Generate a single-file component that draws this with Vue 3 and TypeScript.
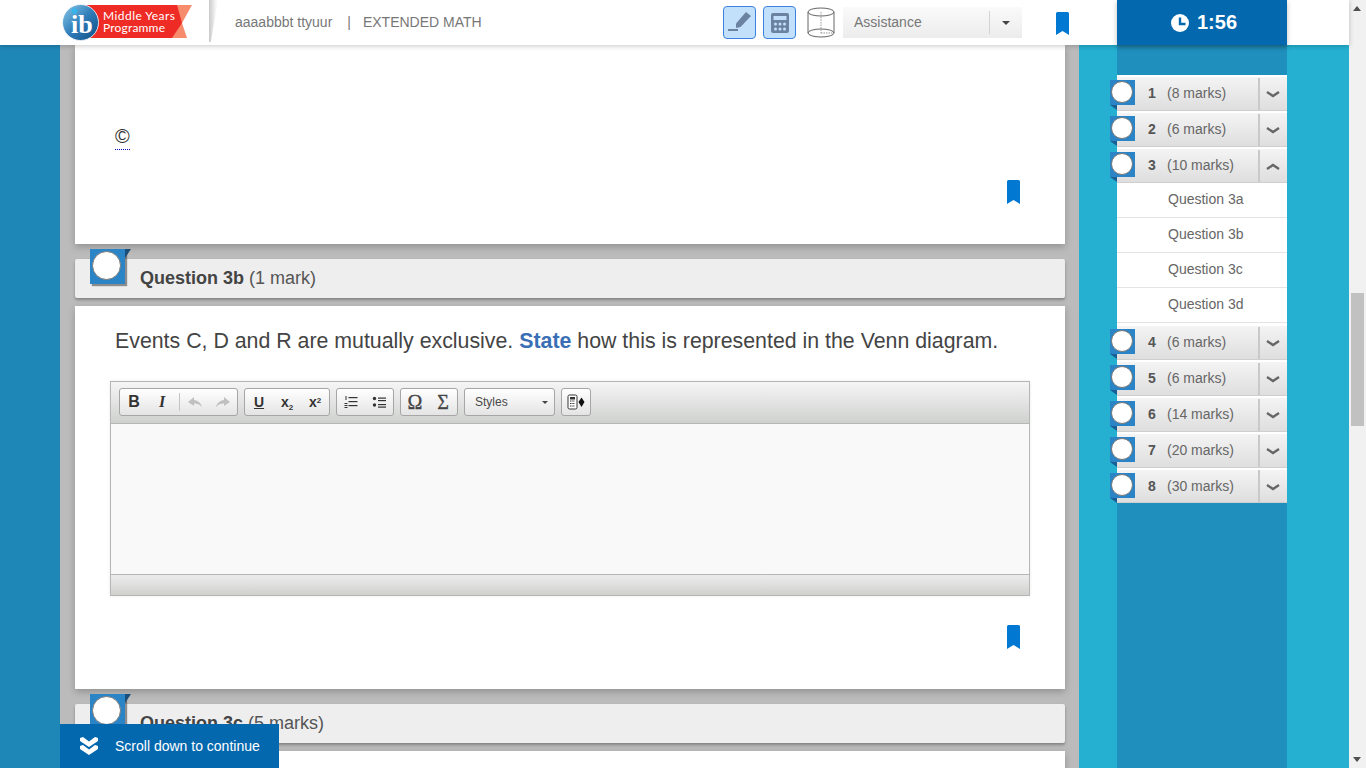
<script setup lang="ts">
interface Row { n: number; marks: number; open?: boolean; subs?: string[] }
const rows: Row[] = [
  { n: 1, marks: 8 },
  { n: 2, marks: 6 },
  { n: 3, marks: 10, open: true, subs: ['Question 3a', 'Question 3b', 'Question 3c', 'Question 3d'] },
  { n: 4, marks: 6 },
  { n: 5, marks: 6 },
  { n: 6, marks: 14 },
  { n: 7, marks: 20 },
  { n: 8, marks: 30 },
]
</script>

<template>
  <div class="root">
    <div class="page">
      <header class="top">
        <div class="logo">
          <svg class="logo-art" width="130" height="37" viewBox="0 0 130 37">
            <defs>
              <linearGradient id="lgBall" x1="0" y1="0" x2="1" y2="1">
                <stop offset="0" stop-color="#8ccbea" />
                <stop offset="0.5" stop-color="#2f7db9" />
                <stop offset="1" stop-color="#0d4c86" />
              </linearGradient>
            </defs>
            <path d="M110 1 H130 L120 19 L125 34 H108 Z" fill="#f78c6c" />
            <path d="M20 1 H115 L120 19 L110 34 H20 Z" fill="#ee2b24" />
            <circle cx="18.500" cy="18.500" r="18" fill="url(#lgBall)" stroke="#fff" stroke-width="0.800" />
            <circle cx="12.500" cy="7" r="2.800" fill="#35b5ea" />
            <text x="41" y="15.500" class="logo-t" textLength="72" lengthAdjust="spacing">Middle Years</text>
            <text x="41" y="28" class="logo-t" textLength="62" lengthAdjust="spacing">Programme</text>
            <text x="9" y="29" class="logo-ib">ib</text>
          </svg>
        </div>
        <div class="wedge"></div>
        <div class="crumb"><span>aaaabbbt ttyuur</span><span class="pipe">|</span><span>EXTENDED MATH</span></div>
        <div class="tools">
          <button class="tool">
            <svg width="25" height="25" viewBox="0 0 25 25">
              <path d="M9 13.500 L19 2 L24 6 L13.500 17 L9 18 Z" fill="#6b82a0" />
              <rect x="1" y="19" width="10" height="2" fill="#6b82a0" />
            </svg>
          </button>
          <button class="tool">
            <svg width="18" height="20" viewBox="0 0 18 20">
              <rect width="18" height="20" rx="2" fill="#6b82a0" />
              <rect x="2.500" y="3" width="13" height="4" fill="#c3e0fb" />
              <g fill="#c3e0fb">
                <circle cx="4.500" cy="11" r="1.500" /><circle cx="9" cy="11" r="1.500" /><circle cx="13.500" cy="11" r="1.500" />
                <circle cx="4.500" cy="16" r="1.500" /><circle cx="9" cy="16" r="1.500" /><circle cx="13.500" cy="16" r="1.500" />
              </g>
            </svg>
          </button>
          <svg class="cyl" width="28" height="31" viewBox="0 0 28 31" fill="none" stroke="#666">
            <ellipse cx="14" cy="5" rx="13" ry="4" fill="#fff" />
            <path d="M1 5 V26 M27 5 V26" />
            <ellipse cx="14" cy="26" rx="13" ry="4" />
            <path d="M14 5 V26 M14 26 H27" stroke-dasharray="1.500 1" stroke="#999" />
          </svg>
          <div class="assist">
            <span class="assist-l">Assistance</span>
            <span class="assist-c"><i class="caret"></i></span>
          </div>
          <svg class="mark-top" width="13" height="23" viewBox="0 0 13 23"><path d="M1.500 0 H11.500 Q13 0 13 1.500 V23 L6.500 19 L0 23 V1.500 Q0 0 1.500 0 Z" fill="#0179d3" /></svg>
        </div>
        <div class="timer">
          <svg width="18" height="18" viewBox="0 0 18 18"><circle cx="9" cy="9" r="9" fill="#fff" /><path d="M9 3.500 V10 H14.500" fill="none" stroke="#0468ae" stroke-width="2.400" /></svg>
          <span>1:56</span>
        </div>
      </header>

      <div class="body">
        <div class="gutter"></div>
        <main class="main">
          <section class="card c1">
            <div class="copy"><span>©</span></div>
            <div class="mark-row">
              <svg width="13" height="24" viewBox="0 0 13 24"><path d="M1.500 0 H11.500 Q13 0 13 1.500 V24 L6.500 20 L0 24 V1.500 Q0 0 1.500 0 Z" fill="#0179d3" /></svg>
            </div>
          </section>

          <div class="qbar">
            <span class="qbadge"><i></i></span>
            <span class="qtitle"><b>Question 3b</b> (1 mark)</span>
          </div>

          <section class="card c2">
            <p class="qtext">Events C, D and R are mutually exclusive. <b>State</b> how this is represented in the Venn diagram.</p>
            <div class="editor">
              <div class="ed-tb">
                <div class="grp g1">
                  <span class="bt tb">B</span><span class="bt ti">I</span><span class="sep"></span>
                  <span class="bt">
                    <svg width="16" height="12" viewBox="0 0 16 12"><path d="M7 1 L1 6 L7 10 V7.500 C10 7.500 13 8.500 15 11 C14 7 11 4.500 7 4 Z" fill="#c0c0c0" /></svg>
                  </span>
                  <span class="bt">
                    <svg width="16" height="12" viewBox="0 0 16 12"><path d="M9 1 L15 6 L9 10 V7.500 C6 7.500 3 8.500 1 11 C2 7 5 4.500 9 4 Z" fill="#c0c0c0" /></svg>
                  </span>
                </div>
                <div class="grp g2">
                  <span class="bt tu">U</span>
                  <span class="bt tx">x<sub>2</sub></span>
                  <span class="bt tx">x<sup>2</sup></span>
                </div>
                <div class="grp g3">
                  <span class="bt">
                    <svg width="14" height="14" viewBox="0 0 14 14" fill="#333"><rect x="1.500" y="1" width="1" height="4" /><rect x="4.500" y="2" width="9" height="1.200" /><rect x="4.500" y="6" width="9" height="1.200" /><rect x="4.500" y="10" width="9" height="1.200" /><rect x="0.500" y="8" width="3" height="1" /><rect x="0.500" y="10" width="3" height="1" /><rect x="0.500" y="12" width="3" height="1" /></svg>
                  </span>
                  <span class="bt">
                    <svg width="14" height="14" viewBox="0 0 14 14" fill="#333"><circle cx="2.500" cy="3.500" r="1.700" /><circle cx="2.500" cy="10" r="1.700" /><rect x="6" y="2.500" width="8" height="1.200" /><rect x="6" y="5" width="8" height="1.200" /><rect x="6" y="9" width="8" height="1.200" /><rect x="6" y="11.500" width="8" height="1.200" /></svg>
                  </span>
                </div>
                <div class="grp g4">
                  <span class="bt tsym">Ω</span>
                  <span class="bt tsym">Σ</span>
                </div>
                <div class="grp combo"><span>Styles</span><i class="caret sm"></i></div>
                <div class="grp g6">
                  <svg width="18" height="16" viewBox="0 0 18 16">
                    <rect x="1" y="1" width="9" height="14" rx="1.500" fill="#fff" stroke="#333" />
                    <rect x="3" y="3" width="5" height="2.500" fill="#333" />
                    <path d="M3 7 H8 M3 9.500 H8 M3 12 H8" stroke="#333" stroke-dasharray="1.500 0.800" />
                    <path d="M11.500 8 L14.500 3.500 L17.500 8 L14.500 13 Z" fill="#111" />
                  </svg>
                </div>
              </div>
              <div class="ed-area"></div>
              <div class="ed-foot"></div>
            </div>
            <div class="mark-row m2">
              <svg width="13" height="24" viewBox="0 0 13 24"><path d="M1.500 0 H11.500 Q13 0 13 1.500 V24 L6.500 20 L0 24 V1.500 Q0 0 1.500 0 Z" fill="#0179d3" /></svg>
            </div>
          </section>

          <div class="qbar">
            <span class="qbadge"><i></i></span>
            <span class="qtitle"><b>Question 3c</b> (5 marks)</span>
          </div>

          <section class="card c3"></section>

          <div class="scrolldown">
            <svg width="18" height="18" viewBox="0 0 18 18" fill="#fff"><path d="M0 1 L3 0 L9 4.500 L15 0 L18 1 V4 L9 10 L0 4 Z" /><path d="M0 9 L3 8 L9 12.500 L15 8 L18 9 V12 L9 18 L0 12 Z" /></svg>
            <span>Scroll down to continue</span>
          </div>
        </main>

        <aside class="side">
          <div class="strip">
            <div class="list">
              <template v-for="r in rows" :key="r.n">
                <div class="row">
                  <span class="sbadge"><i></i></span>
                  <span class="num">{{ r.n }}</span>
                  <span class="marks">({{ r.marks }} marks)</span>
                  <span class="chev">
                    <svg width="14" height="7" viewBox="0 0 14 7" fill="none" stroke="#666" stroke-width="2.400"><path :d="r.open ? 'M1 6 L7 2 L13 6' : 'M1 1 L7 5 L13 1'" /></svg>
                  </span>
                </div>
                <div v-if="r.subs" class="subs">
                  <div v-for="s in r.subs" :key="s" class="sub">{{ s }}</div>
                </div>
              </template>
            </div>
          </div>
        </aside>
      </div>
    </div>

    <div class="sbar">
      <i class="arr up"></i>
      <div class="thumb"></div>
      <i class="arr dn"></i>
    </div>
  </div>
</template>

<style>
html, body { margin: 0; overflow: hidden; }
</style>

<style scoped>
.root { display: flex; width: 1366px; height: 768px; overflow: hidden; font-family: "Liberation Sans", Arial, sans-serif; }
.page { width: 1349px; height: 768px; display: flex; flex-direction: column; position: relative; }

.top { height: 45px; background: #fff; display: flex; align-items: flex-start; box-shadow: 0 1px 5px rgba(0,0,0,.22); position: relative; z-index: 5; padding-left: 62px; flex: none; box-sizing: border-box; }
.logo { width: 130px; height: 37px; margin-top: 4px; flex: none; }
.logo-art { display: block; }
.logo-t { font: 12px Lato, "Liberation Sans", sans-serif; fill: #fff; }
.logo-ib { font: bold 26px "Liberation Serif", serif; fill: #fff; }
.wedge { width: 9px; height: 42px; margin-left: 17px; background: linear-gradient(90deg, #c9c9c9, #f3f3f3 70%, #fff); clip-path: polygon(0 0, 100% 0, 20% 100%, 0 100%); flex: none; }
.crumb { margin-left: 17px; font-size: 14px; color: #777; line-height: 45px; width: 488px; flex: none; white-space: nowrap; }
.pipe { display: inline-block; margin: 0 12px 0 15px; }
.tools { display: flex; align-items: flex-start; flex: none; }
.tool { width: 33px; height: 33px; box-sizing: border-box; margin: 6px 7px 0 0; padding: 0; background: #c3e0fb; border: 1px solid #3c83e0; border-radius: 4px; display: flex; align-items: center; justify-content: center; }
.cyl { margin: 7px 0 0 4px; }
.assist { width: 179px; height: 31px; margin: 7px 0 0 8px; display: flex; background: linear-gradient(#fafafa, #ececec); color: #777; font-size: 14px; line-height: 31px; }
.assist-l { width: 146px; padding-left: 11px; box-sizing: border-box; }
.assist-c { width: 33px; position: relative; display: flex; align-items: center; justify-content: center; }
.assist-c::before { content: ""; position: absolute; left: 0; top: 4px; bottom: 4px; width: 1px; background: #d4d4d4; }
.caret { width: 0; height: 0; border: 4px solid transparent; border-top: 4px solid #444; border-bottom: 0; display: block; }
.mark-top { margin: 12px 0 0 34px; }
.timer { margin-left: auto; margin-right: 62px; width: 170px; height: 45px; background: #0468ae; color: #fff; display: flex; align-items: center; justify-content: center; gap: 8px; font-size: 20px; font-weight: bold; flex: none; box-shadow: 0 2px 5px rgba(0,0,0,.25); padding-left: 4px; box-sizing: border-box; }

.body { flex: 1; display: flex; min-height: 0; }
.gutter { width: 60px; background: #1f87b8; flex: none; }
.main { width: 1019px; flex: none; background: #bbb; padding-left: 15px; box-sizing: border-box; overflow: hidden; }
.card { width: 990px; background: #fff; box-shadow: 0 3px 7px rgba(0,0,0,.22); box-sizing: border-box; }
.c1 { height: 199px; padding: 79px 45px 0 40px; }
.copy { font-size: 20px; line-height: 24px; color: #333; height: 56px; }
.copy span { display: inline-block; border-bottom: 1px dotted #0000c0; height: 24px; line-height: 23px; }
.mark-row { display: flex; justify-content: flex-end; }
.qbar { width: 990px; height: 39px; margin: 15px 0 8px; background: #eee; box-shadow: 0 2px 3px rgba(0,0,0,.3); position: relative; display: flex; align-items: center; padding: 0 0 0 65px; box-sizing: border-box; border-radius: 2px; }
.qtitle { font-size: 18px; color: #555; line-height: 39px; }
.qtitle b { color: #444; }
.qbadge { position: absolute; left: 15px; top: -10px; width: 35px; height: 35px; background: #2a84c6; box-shadow: 2px 2px 1px rgba(60,60,60,.55); display: flex; align-items: center; justify-content: center; }
.qbadge::after { content: ""; position: absolute; left: 35px; top: 0; border-style: solid; border-width: 0 0 9px 6px; border-color: transparent transparent transparent #1a4f7c; }
.qbadge i { width: 27px; height: 27px; border-radius: 50%; background: #fff; border: 1.500px solid #777; margin: -3px 0 0 -3px; }
.c2 { height: 383px; padding: 20px 35px 0 35px; }
.qtext { margin: 0 0 25px 5px; font-size: 21.330px; line-height: 30px; color: #444; white-space: nowrap; }
.qtext b { color: #3a6fb5; }
.editor { width: 920px; height: 215px; box-sizing: border-box; border: 1px solid #b6b6b6; display: flex; flex-direction: column; box-shadow: 0 0 3px rgba(0,0,0,.08); }
.ed-tb { height: 42px; box-sizing: border-box; border-bottom: 1px solid #b6b6b6; background: linear-gradient(#f5f5f5, #cfd1cf); padding: 6px 0 0 8px; display: flex; gap: 6px; flex: none; }
.grp { height: 28px; box-sizing: border-box; border: 1px solid #a6a6a6; border-radius: 3px; background: linear-gradient(#fff, #e4e4e4); display: flex; align-items: center; color: #333; flex: none; }
.g1 { width: 119px; }
.g2 { width: 86px; }
.g3 { width: 58px; }
.g4 { width: 58px; }
.combo { width: 91px; padding: 0 6px 0 10px; font-size: 12px; color: #484848; justify-content: space-between; }
.g6 { width: 30px; justify-content: center; }
.bt { width: 28px; height: 26px; display: flex; align-items: center; justify-content: center; flex: none; color: #333; }
.sep { width: 1px; height: 18px; background: #c4c4c4; margin: 0 1px 0 3px; flex: none; }
.tb { font: bold 16px "Liberation Sans", sans-serif; }
.ti { font: italic bold 16px "Liberation Serif", serif; }
.tu { font: bold 14px "Liberation Sans", sans-serif; text-decoration: underline; }
.tx { font: bold 14px "Liberation Sans", sans-serif; display: block; text-align: center; line-height: 26px; }
.tx sub, .tx sup { font-size: 8px; line-height: 0; }
.tx sub { vertical-align: -3px; }
.tx sup { vertical-align: 4px; }
.tsym { font: 20px "Liberation Serif", serif; color: #444; -webkit-text-stroke: 0.3px #444; }
.caret.sm { border-width: 3px; border-top: 3px solid #444; border-bottom: 0; }
.ed-area { flex: 1; background: #f9f9f9; }
.ed-foot { height: 21px; flex: none; border-top: 1px solid #b6b6b6; box-sizing: border-box; background: linear-gradient(#ececec, #d0d1cf); }
.m2 { margin-top: 29px; padding-right: 10px; }
.c3 { height: 40px; }
.scrolldown { position: absolute; left: 60px; bottom: 0; width: 219px; height: 44px; background: #0468ae; color: #fff; display: flex; align-items: center; padding-left: 20px; gap: 17px; font-size: 14px; box-sizing: border-box; z-index: 3; }

.side { width: 270px; flex: none; background: #25b0d2; padding-left: 38px; box-sizing: border-box; }
.strip { width: 170px; height: 100%; background: #1f90bd; padding-top: 30px; box-sizing: border-box; }
.list { background: #fff; }
.row { height: 36px; box-sizing: border-box; position: relative; display: flex; align-items: center; background: linear-gradient(#f4f4f4, #dedede); border-top: 2px solid #fff; border-bottom: 1px solid #cfcfcf; color: #666; font-size: 14px; }
.row:last-child { height: 35px; }
.row:last-child .num, .row:last-child .marks { margin-top: -1px; }
.sbadge { position: absolute; left: -7px; top: 3px; width: 25px; height: 25px; background: #2a84c6; display: flex; align-items: center; justify-content: center; }
.sbadge::after { content: ""; position: absolute; left: 0; top: 25px; border-style: solid; border-width: 0 7px 5px 0; border-color: transparent #1a5f94 transparent transparent; }
.sbadge i { width: 22px; height: 22px; box-sizing: border-box; border-radius: 50%; background: #fff; border: 1.500px solid #777; margin: -1px 0 0 -1px; }
.num { margin: -2px 0 0 31px; width: 20px; font-weight: bold; color: #555; }
.marks { flex: 1; margin-top: -2px; margin-left: -1px; }
.chev { width: 29px; height: 32px; border-left: 2px solid #c9c9c9; box-sizing: border-box; display: flex; align-items: center; justify-content: center; padding: 2px 2px 0 0; }
.sub { height: 35px; box-sizing: border-box; border-bottom: 1px solid #e4e4e4; padding-left: 51px; line-height: 33px; color: #666; font-size: 14px; background: #fff; }
.subs { padding-bottom: 1px; }

.sbar { width: 17px; height: 768px; background: #f1f1f1; position: relative; flex: none; }
.thumb { position: absolute; left: 2px; top: 293px; width: 13px; height: 133px; background: #c1c1c1; }
.arr { position: absolute; left: 4px; width: 0; height: 0; border-left: 4px solid transparent; border-right: 4px solid transparent; }
.arr.up { top: 6px; border-bottom: 5px solid #505050; }
.arr.dn { bottom: 6px; border-top: 5px solid #505050; }
</style>
